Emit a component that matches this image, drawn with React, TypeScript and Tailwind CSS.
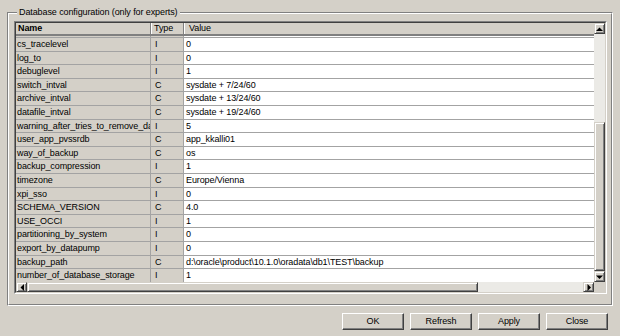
import React from "react";

type Row = { name: string; type: string; value: string };

const rows: Row[] = [
  { name: "cs_tracelevel", type: "I", value: "0" },
  { name: "log_to", type: "I", value: "0" },
  { name: "debuglevel", type: "I", value: "1" },
  { name: "switch_intval", type: "C", value: "sysdate + 7/24/60" },
  { name: "archive_intval", type: "C", value: "sysdate + 13/24/60" },
  { name: "datafile_intval", type: "C", value: "sysdate + 19/24/60" },
  { name: "warning_after_tries_to_remove_datafile", type: "I", value: "5" },
  { name: "user_app_pvssrdb", type: "C", value: "app_kkalli01" },
  { name: "way_of_backup", type: "C", value: "os" },
  { name: "backup_compression", type: "I", value: "1" },
  { name: "timezone", type: "C", value: "Europe/Vienna" },
  { name: "xpi_sso", type: "I", value: "0" },
  { name: "SCHEMA_VERSION", type: "C", value: "4.0" },
  { name: "USE_OCCI", type: "I", value: "1" },
  { name: "partitioning_by_system", type: "I", value: "0" },
  { name: "export_by_datapump", type: "I", value: "0" },
  { name: "backup_path", type: "C", value: "d:\\oracle\\product\\10.1.0\\oradata\\db1\\TEST\\backup" },
  { name: "number_of_database_storage", type: "I", value: "1" },
];

const raised =
  "border border-t-[#d4d0c8] border-l-[#d4d0c8] border-b-[#404040] border-r-[#404040] shadow-[inset_1px_1px_0_#ffffff,inset_-1px_-1px_0_#808080] bg-[#d4d0c8]";

function Arrow({ dir }: { dir: "up" | "down" | "left" | "right" }) {
  const pts = {
    up: "0,4 7,4 3.5,0.5",
    down: "0,0.5 7,0.5 3.5,4",
    left: "4,0 4,7 0.5,3.5",
    right: "0.5,0 0.5,7 4,3.5",
  }[dir];
  const vertical = dir === "up" || dir === "down";
  return (
    <svg width={vertical ? 7 : 4} height={vertical ? 4 : 7} viewBox={vertical ? "0 0 7 4" : "0 0 4 7"}>
      <polygon points={pts} fill="#000" />
    </svg>
  );
}

function ScrollButton({ dir }: { dir: "up" | "down" | "left" | "right" }) {
  return (
    <div className={`${raised} flex h-[11px] w-[11px] shrink-0 items-center justify-center`}>
      <Arrow dir={dir} />
    </div>
  );
}

function DialogButton({ label }: { label: string }) {
  return (
    <button className="flex h-[17px] w-[62px] items-center justify-center border border-t-white border-l-white border-b-[#404040] border-r-[#404040] bg-[#d4d0c8] leading-none shadow-[inset_-1px_-1px_0_#808080]">
      {label}
    </button>
  );
}

export default function App() {
  return (
    <div className="flex h-[336px] w-[620px] flex-col bg-[#d4d0c8] px-[7px] pt-[12px] font-['Liberation_Sans',Arial,sans-serif] text-[9px] tracking-[-0.1px] text-black">
      {/* group box */}
      <div className="relative h-[294px] border border-t-[#808080] border-l-[#808080] border-b-white border-r-white">
        <div className="h-full border border-t-white border-l-white border-b-[#808080] border-r-[#808080] pb-[10px] pl-[5px] pr-[4px] pt-[7px]">
          {/* table */}
          <div className="h-full border border-t-[#808080] border-l-[#808080] border-b-white border-r-white">
            <div className="grid h-full grid-cols-[1fr_11px] grid-rows-[1fr_10px] border border-t-[#404040] border-l-[#404040] border-b-[#d4d0c8] border-r-[#d4d0c8]">
              <div className="flex min-h-0 flex-col overflow-hidden">
                <div className="flex h-[13px] shrink-0 border-b-2 border-[#808080] leading-[11px]">
                  <div className="w-[135px] border-r border-[#808080] pl-[2px] font-bold">Name</div>
                  <div className="w-[33px] border-l border-r border-l-white border-r-[#808080] pl-[2px]">Type</div>
                  <div className="flex-1 border-l border-white pl-[4px]">Value</div>
                </div>
                <div className="min-h-0 flex-1 overflow-hidden">
                  {/* tail of the row scrolled above */}
                  <div className="flex h-[2px] border-b border-[#a3a3a3]">
                    <div className="w-[135px] border-r border-[#a3a3a3]" />
                    <div className="w-[33px] border-r border-[#a3a3a3]" />
                    <div className="flex-1 bg-white" />
                  </div>
                  {rows.map((r) => (
                    <div key={r.name} className="flex h-[13.6px] items-center border-b border-[#a3a3a3] leading-[12px]">
                      <div className="h-full w-[135px] overflow-hidden whitespace-nowrap border-r border-[#a3a3a3] pl-[1px]">
                        {r.name}
                      </div>
                      <div className="h-full w-[33px] border-r border-[#a3a3a3] pl-[4px]">{r.type}</div>
                      <div className="h-full flex-1 whitespace-nowrap bg-white pl-[2px]">{r.value}</div>
                    </div>
                  ))}
                </div>
              </div>
              {/* vertical scrollbar */}
              <div className="flex flex-col bg-[#ebeae6]">
                <ScrollButton dir="up" />
                <div className="flex-1" />
                <div className={`${raised} h-[149px]`} />
                <ScrollButton dir="down" />
              </div>
              {/* horizontal scrollbar */}
              <div className="flex h-[10px] bg-[#ebeae6]">
                <div className={`${raised} flex h-[10px] w-[11px] items-center justify-center`}>
                  <Arrow dir="left" />
                </div>
                <div className={`${raised} h-[10px] w-[451px]`} />
                <div className="flex-1" />
                <div className={`${raised} flex h-[10px] w-[11px] items-center justify-center`}>
                  <Arrow dir="right" />
                </div>
              </div>
              <div className="bg-[#d4d0c8]" />
            </div>
          </div>
        </div>
        <span className="absolute -top-[7px] left-[9px] bg-[#d4d0c8] px-[2px] leading-[12px]">
          Database configuration (only for experts)
        </span>
      </div>

      {/* buttons */}
      <div className="mt-[7px] flex justify-end gap-[6px] pr-[5px]">
        <DialogButton label="OK" />
        <DialogButton label="Refresh" />
        <DialogButton label="Apply" />
        <DialogButton label="Close" />
      </div>
    </div>
  );
}
